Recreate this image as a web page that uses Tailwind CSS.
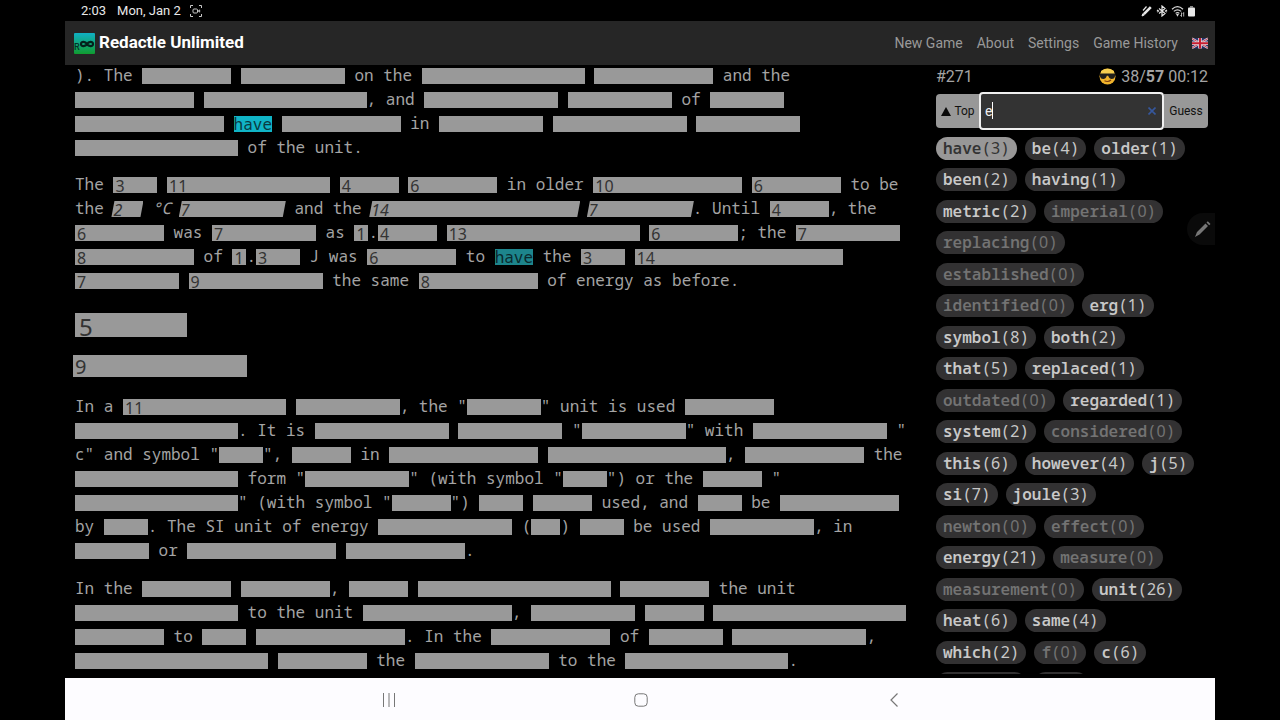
<!DOCTYPE html>
<html lang="en">
<head>
  <meta charset="UTF-8" />
  <meta name="viewport" content="width=device-width, initial-scale=1.0" />
  <title>Redactle Unlimited</title>
  <script src="https://cdn.jsdelivr.net/npm/@tailwindcss/browser@4"></script>
</head>

<body class="flex h-screen flex-col overflow-hidden bg-black px-[65px] font-[Roboto,sans-serif] text-[#a4a4a4]">
  <!-- Device status bar -->
  <div class="flex h-[21px] shrink-0 items-center pr-5 pl-4 text-[13px] text-[#e8e8e8]">
    <span>2:03</span>
    <span class="ml-[11px]">Mon, Jan 2</span>
    <svg class="ml-[9px] h-3 w-3" viewBox="0 0 12 12" fill="none" stroke="#c8c8c8">
      <path d="M.5 3V.5H3M9 .5h2.500V3M11.500 9v2.500H9M3 11.500H.5V9" />
      <rect x="3" y="4" width="4.500" height="4" rx="1" />
      <path d="M8 6l1.800-1.300v2.600z" fill="#c8c8c8" stroke-width=".5" />
    </svg>
    <div class="ml-auto flex items-center gap-[3px]">
      <svg class="h-3 w-3" viewBox="0 0 12 12" fill="none" stroke="#e8e8e8">
        <path d="M2.800 9.200 9.800 2.200" stroke-width="2.600" />
        <path d="M1 11l.8-2.200L3.200 10z" fill="#e8e8e8" />
        <path d="M2 5.500 5.500 1.500" stroke-width="1.200" />
      </svg>
      <svg class="h-3 w-3" viewBox="0 0 12 12" fill="none" stroke="#e8e8e8" stroke-width="1.200">
        <path d="M3 3.500 9 8.500 6 11V1l3 2.500L3 8.500M1 5l1.500 1L1 7M11 5 9.500 6 11 7" />
      </svg>
      <svg class="h-3 w-[14px]" viewBox="0 0 14 12" fill="none" stroke="#d8d8d8" stroke-width="1.200">
        <path d="M1 4.200q5.500-5 11 0M2.800 6.400q3.700-3.200 7.400 0M4.600 8.400q1.900-1.500 3.800 0" />
        <path d="M6 9.500h1l-.5 1z" fill="#d8d8d8" />
        <path d="M10.500 7.500v4M9.500 10l1 1.500M12.700 11.500v-4l-.8 1.200" stroke-width=".8" />
      </svg>
      <svg class="h-3 w-[7px]" viewBox="0 0 7 12" fill="#e8e8e8">
        <path d="M2 1h3v1.500H2z" fill="#888888" />
        <rect y="2.500" width="7" height="9" rx="1" />
      </svg>
    </div>
  </div>

  <!-- Site header -->
  <header class="flex h-11 shrink-0 items-center bg-[#262626] pr-[7px] pl-[9px]">
    <svg class="h-[21px] w-[21px]" viewBox="0 0 21 21">
      <defs>
        <linearGradient id="logo" x1="0" y1="0" x2="0" y2="1">
          <stop offset="0" stop-color="#10b0c4" />
          <stop offset="1" stop-color="#109c30" />
        </linearGradient>
      </defs>
      <rect width="21" height="21" rx="1" fill="url(#logo)" />
      <text x="0" y="17" font-family="Roboto" font-size="9" font-weight="500" fill="#04302c">R</text>
      <path d="M13 11c-1.500-2.500-6-3-6 0s4.500 2.500 6 0 6-3 6 0-4.500 2.500-6 0z" fill="none" stroke="#04201c" stroke-width="2.200" />
    </svg>
    <h1 class="ml-1 text-[17px] font-bold text-white">Redactle Unlimited</h1>
    <nav class="ml-auto flex items-center gap-[14px] text-[14px] text-[#999999]">
      <a href="#new">New Game</a>
      <a href="#about">About</a>
      <a href="#settings">Settings</a>
      <a href="#history">Game History</a>
      <a href="#language" aria-label="English">
        <svg class="h-3 w-4" viewBox="0 0 16 12">
          <rect y="1" width="16" height="10.500" rx="1" fill="#26306a" />
          <path d="M0 1.500 16 11M16 1.500 0 11" stroke="#d8d0d8" stroke-width="2.200" />
          <path d="M0 1.500 16 11M16 1.500 0 11" stroke="#c02438" stroke-width=".8" />
          <path d="M8 1v10.500M0 6.200h16" stroke="#e0d8dc" stroke-width="3.600" />
          <path d="M8 1v10.500M0 6.200h16" stroke="#c81c30" stroke-width="2" />
        </svg>
      </a>
    </nav>
  </header>

  <main class="relative flex min-h-0 flex-1 overflow-hidden">
    <!-- Article -->
    <article id="article" class="min-w-0 flex-1 overflow-hidden pl-[10px] font-['Noto_Sans_Mono','DejaVu_Sans_Mono',monospace] text-[16px] leading-6 whitespace-nowrap">
      <p class="-mt-[2px] mb-[13px]" data-text="). The [6] [7] on the [11] [8] and the
[8] [11], and [9] [7] of [5]
[10] {have} [8] in [7] [9] [7]
[11] of the unit."></p>
      <p data-text="The [3#] [11#] [4#] [6#] in older [10#] [6#] to be
the [2/] <i>°C</i> [7/] and the [14/] [7/]. Until [4#], the
[6#] was [7#] as [1#].[4#] [13#] [6#]; the [7#]
[8#] of [1#].[3#] J was [6#] to {have|} the [3#] [14#]
[7#] [9#] the same [8#] of energy as before."></p>
      <h2 class="mt-[21px] h-6 w-[112px] bg-[#999999] pl-1 font-['Noto_Sans'] text-[24px] leading-[27px] text-[#333333]">5</h2>
      <h3 class="mt-[18px] -ml-[2px] h-[22px] w-[174px] bg-[#999999] pl-[2px] font-['Noto_Sans'] text-[20px] leading-6 text-[#333333]">9</h3>
      <p class="mt-[17px] mb-[14px]" data-text="In a [11#] [7], the &quot;[5]&quot; unit is used [6]
[11]. It is [9] [7] &quot;[7]&quot; with [9] &quot;
c&quot; and symbol &quot;[3]&quot;, [4] in [10] [12], [8] the
[11] form &quot;[7]&quot; (with symbol &quot;[3]&quot;) or the [4] &quot;
[11]&quot; (with symbol &quot;[4]&quot;) [3] [4] used, and [3] be [8]
by [3]. The SI unit of energy [9] ([2]) [3] be used [7], in
[5] or [10] [8]."></p>
      <p data-text="In the [6] [6], [4] [13] [6] the unit
[11] to the unit [10], [7] [4] [13]
[6] to [3] [10]. In the [8] of [5] [9],
[13] [6] the [9] to the [11]."></p>
    </article>

    <!-- Guesses -->
    <aside class="mb-1 flex w-[279px] shrink-0 flex-col overflow-hidden pr-[7px]">
      <div class="mb-1 flex h-[23px] shrink-0 items-center text-[16px] leading-[22px]">
        <span>#271</span>
        <svg class="mr-[5px] ml-auto h-[17px] w-[17px]" viewBox="0 0 17 17">
          <circle cx="8.500" cy="8.500" r="8" fill="#f0b42c" />
          <path d="M2 3Q8.500-1.500 15 3V6H2z" fill="#f6cf50" />
          <path d="M.5 5.500h16l-.7 3.500q-.5 2-3 2t-3.600-3.200H7.800Q6.800 11 4.200 11T1.200 9z" fill="#20201c" />
          <path d="M5.500 12.800q3.500 1.700 6.500-.8" fill="none" stroke="#7a3c10" stroke-width="1.200" />
        </svg>
        <span>38/<b>57</b> 00:12</span>
      </div>
      <form class="flex shrink-0 items-center" onsubmit="return false">
        <button type="button" class="flex h-[34px] w-11 items-center justify-center gap-[3px] rounded-l bg-[#989898] text-[12px] text-[#111111]">
          <svg class="h-[9px] w-[10px]" viewBox="0 0 10 9"><path d="M5 0l5 9H0z" fill="#080808" /></svg>
          Top
        </button>
        <div class="relative -ml-px min-w-0 flex-1">
          <input type="text" value="e" aria-label="Guess a word" class="h-[38px] w-full rounded border-2 border-[#f0f0f0] bg-[#333333] px-1 text-[14px] text-[#eeeeee] outline-none" />
          <span class="absolute top-[10px] left-[13px] h-[17px] w-px bg-white"></span>
          <button type="button" aria-label="Clear" class="absolute top-[15px] right-2">
            <svg class="h-2 w-2" viewBox="0 0 8 8" stroke="#36579c" stroke-width="1.600"><path d="M.5.5l7 7M7.500.5l-7 7" /></svg>
          </button>
        </div>
        <button type="submit" class="h-[34px] w-11 rounded-r bg-[#989898] text-[12px] text-[#111111]">Guess</button>
      </form>
      <div id="guesses" class="mt-[7px] font-['Noto_Sans_Mono','DejaVu_Sans_Mono',monospace] text-[16px] leading-[22px] whitespace-nowrap"></div>
    </aside>

    <!-- Floating pen shortcut -->
    <div class="absolute top-[148px] right-0 flex h-8 w-7 items-center justify-center rounded-l-full bg-[#0a0a0a] pl-1">
      <svg class="h-4 w-4" viewBox="0 0 16 16" fill="#777777">
        <path d="M0 16l2-5 8.500-8.500 2.500 2.500L4.500 13.500zM11.500 1.500l1.300-1.300 2.700 2.700-1.300 1.300z" />
      </svg>
    </div>
  </main>

  <!-- Device navigation -->
  <footer class="flex h-[42px] shrink-0 justify-center bg-[#fdfcff] pt-[2px] pl-[3px]">
    <button class="flex w-[22%] items-center justify-center" aria-label="Recent apps">
      <svg class="h-[14px] w-[14px]" viewBox="0 0 14 14" stroke="#777777"><path d="M1.500 0v14M7 0v14M12.500 0v14" /></svg>
    </button>
    <button class="flex w-[22%] items-center justify-center" aria-label="Home">
      <svg class="h-[14px] w-[14px]" viewBox="0 0 14 14" fill="none" stroke="#777777"><rect x=".8" y=".8" width="12.400" height="12.400" rx="3.500" /></svg>
    </button>
    <button class="flex w-[22%] items-center justify-center" aria-label="Back">
      <svg class="h-[14px] w-2" viewBox="0 0 8 14" fill="none" stroke="#777777" stroke-width="1.200"><path d="M7.500.5 1 7l6.500 6.500" /></svg>
    </button>
  </footer>

  <script>
    const barClass = "mt-[5px] inline-block h-4 bg-[#999999] align-top font-['Noto_Sans'] leading-[18px] text-[#333333]";
    const slantClass = ' italic -ml-[2px] -mr-px [clip-path:polygon(3px_0,100%_0,calc(100%-3px)_100%,0_100%)]';
    const markClass = 'mt-[5px] inline-block h-4 align-top leading-4';

    // [n] hidden word, [n#] hidden word showing its length, [n/] the same in italics
    function bar(match, n, kind) {
      const slant = kind === '/';
      const width = Math.floor(n * 14.9) + (slant ? 3 : 0);
      const label = kind ? '<span class="pl-[2px]">' + n + '</span>' : '';
      return '<span class="' + barClass + (slant ? slantClass : '') + '" style="width:' + width + 'px">' + label + '</span>';
    }

    document.querySelectorAll('#article p').forEach(p => {
      p.innerHTML = p.dataset.text
        .replace(/\[(\d+)([#\/]?)\]/g, bar)
        .replace('{have}', '<mark class="' + markClass + ' bg-[#10b4c6] text-[#0a3a40]">have</mark>')
        .replace('{have|}', '<mark class="' + markClass + ' bg-[#1d858c] text-[#0a2a2e]">have</mark>')
        .replace(/\n/g, '<br>');
    });

    const guesses = [
      'have 3,be 4,older 1', 'been 2,having 1', 'metric 2,imperial 0', 'replacing 0',
      'established 0', 'identified 0,erg 1', 'symbol 8,both 2', 'that 5,replaced 1',
      'outdated 0,regarded 1', 'system 2,considered 0', 'this 6,however 4,j 5',
      'si 7,joule 3', 'newton 0,effect 0', 'energy 21,measure 0', 'measurement 0,unit 26',
      'heat 6,same 4', 'which 2,f 0,c 6'
    ];

    function pill(item) {
      const [word, hits] = item.split(' ');
      let color = 'bg-[#323132] text-[#c8c8c8]';
      if (hits === '0') color = 'bg-[#323132] text-[#737373]';
      if (word === 'have') color = 'bg-[#989797] text-[#333333]';
      return '<button class="flex h-[23px] rounded-full px-[7px] ' + color + '"><b class="font-semibold">' + word +
        '</b>(<span class="font-[\'Noto_Sans\']">' + hits + '</span>)</button>';
    }

    document.getElementById('guesses').innerHTML = guesses
      .map(row => '<div class="mb-2 flex gap-2 even:mb-[9px]">' + row.split(',').map(pill).join('') + '</div>')
      .join('') +
      '<div class="flex gap-2"><span class="h-[23px] w-[90px] rounded-full bg-[#323132]"></span><span class="h-[23px] w-[54px] rounded-full bg-[#323132]"></span></div>';
  </script>
</body>
</html>
